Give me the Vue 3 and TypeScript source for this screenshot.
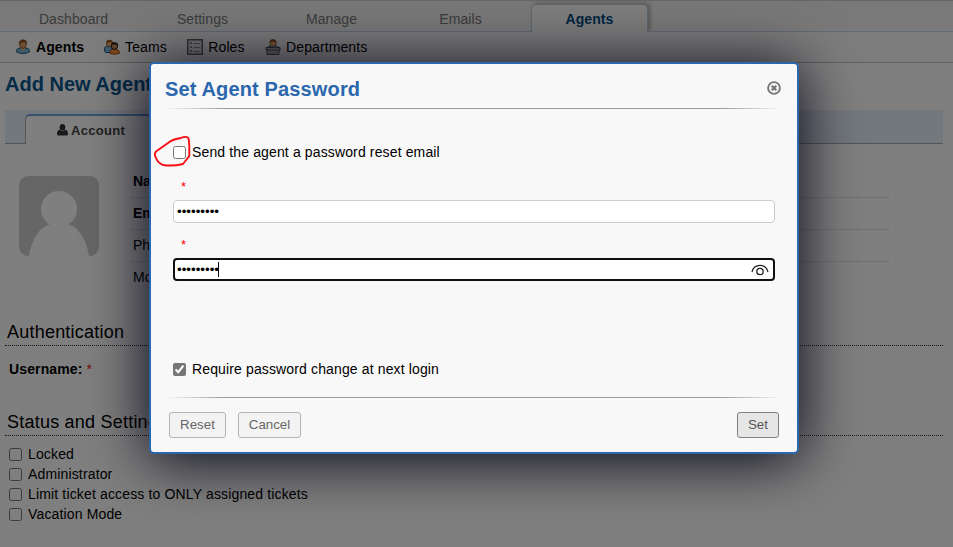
<script setup lang="ts">
import { ref } from 'vue'

interface Tab { label: string; active?: boolean }

const tabs: Tab[] = [
  { label: 'Dashboard' },
  { label: 'Settings' },
  { label: 'Manage' },
  { label: 'Emails' },
  { label: 'Agents', active: true },
]
const fields = [
  { label: 'Name:', required: true },
  { label: 'Email Address:', required: true },
  { label: 'Phone Number:', required: false },
  { label: 'Mobile Number:', required: false },
]
const settings = ['Locked', 'Administrator', 'Limit ticket access to ONLY assigned tickets', 'Vacation Mode']

const sendReset = ref(false)
const requireChange = ref(true)
const password = ref('agentpass')
const confirmation = ref('agentpass')
</script>

<template>
  <div class="screen">
    <div class="page">
      <nav class="tabs">
        <a v-for="t in tabs" :key="t.label" class="tab" :class="{ active: t.active }">{{ t.label }}</a>
      </nav>
      <nav class="subnav">
        <a class="sub current">
          <svg width="16" height="16" viewBox="0 0 16 16">
            <path d="M1.500 11.500Q2 9 5 9h6q3 0 3.500 2.500v1.500Q11 14.500 8 14.500T1.500 13z" fill="#78b4da" stroke="#315f80" />
            <path d="M6 8h4v2L8 11.500 6 10z" fill="#efad6b" />
            <ellipse cx="8" cy="5.500" rx="3.300" ry="3.800" fill="#e0a068" stroke="#99602c" />
            <path d="M4 5.500C3.500 2 5.500.5 8 .5s4.500 1.500 4 5L10.500 3.500H6.500z" fill="#8e501c" />
          </svg>
          <span>Agents</span>
        </a>
        <a class="sub teams">
          <svg width="16" height="16" viewBox="0 0 16 16">
            <path d="M.5 9Q1 7.500 3 7.500h5v6H2Q.5 13 .5 11z" fill="#78b4da" stroke="#315f80" />
            <circle cx="5.500" cy="4.500" r="3" fill="#f4b77a" stroke="#85501f" />
            <path d="M2.500 4.500Q2 .5 5.500.8T8.500 4L6.500 3z" fill="#9b5820" />
            <path d="M6 12.500Q6.500 10.500 8.500 10.500h4q2 0 2.800 2v2q-4.500 1.500-9.300 0z" fill="#f59145" stroke="#a64815" />
            <circle cx="10.500" cy="7" r="3.200" fill="#c48c60" stroke="#382619" />
            <path d="M7 7Q6.500 3 10.500 3.200T14 7L11.800 5.500H9z" fill="#33261d" />
          </svg>
          <span>Teams</span>
        </a>
        <a class="sub roles">
          <svg width="16" height="16" viewBox="0 0 16 16">
            <path d="M.75.750h14.500v14.500H.75z" fill="#e6e6e6" stroke="#626262" stroke-width="1.500" />
            <path d="M3 3h2v2H3zm0 4h2v2H3zm0 4h2v2H3z" fill="#888" />
            <path d="M6.500 4.500H13M6.500 8.500H13M6.500 12.500H13" stroke="#8a8a8a" />
          </svg>
          <span>Roles</span>
        </a>
        <a class="sub depts">
          <svg width="16" height="16" viewBox="0 0 16 16">
            <path d="M3.500 9V7.500L6 6.500h4l2.500 1V9z" fill="#78b4da" stroke="#315f80" />
            <ellipse cx="8" cy="4" rx="3" ry="3.300" fill="#f4b77a" stroke="#99602c" />
            <path d="M4.500 4Q4.500.3 8 .3t3.500 3.700L9.500 2.800h-3z" fill="#8d501d" />
            <path d="M1 8.500h14v2.500h-1v4.500H2V11H1z" fill="#b7afb0" stroke="#544e50" />
            <path d="M2 11h12" stroke="#6b6466" />
          </svg>
          <span>Departments</span>
        </a>
      </nav>
      <main class="content">
        <h2>Add New Agent</h2>
        <div class="strip">
          <div class="account">
            <svg width="11" height="12" viewBox="0 0 11 12">
              <ellipse cx="5.500" cy="3.200" rx="2.800" ry="3.200" />
              <path d="M0 10Q0 6 2.800 5.800q2.700 2.200 5.400 0Q11 6 11 10q0 1.500-1.500 1.500h-8Q0 11.500 0 10z" />
            </svg>
            <span>Account</span>
          </div>
        </div>
        <section class="profile">
          <svg class="avatar" width="80" height="80" viewBox="0 0 80 80">
            <rect width="80" height="80" rx="9" fill="#cdcdcd" />
            <circle cx="40" cy="33" r="18" fill="#fff" />
            <path d="M10 80C13 62 22 49 33 48h14c11 1 20 14 23 32z" fill="#fff" />
          </svg>
          <div class="rows">
            <div v-for="f in fields" :key="f.label" class="row" :class="{ required: f.required }">{{ f.label }}</div>
          </div>
        </section>
        <h3>Authentication</h3>
        <div class="username">Username: <span class="star">*</span></div>
        <h3 class="status">Status and Settings</h3>
        <div class="settings">
          <label v-for="s in settings" :key="s"><input type="checkbox"><span>{{ s }}</span></label>
        </div>
      </main>
    </div>

    <div class="overlay">
      <div class="dialog">
        <header>
          <h1>Set Agent Password</h1>
          <svg class="close" width="14" height="14" viewBox="0 0 14 14">
            <circle cx="7" cy="7" r="5.900" fill="none" stroke="#777" stroke-width="1.900" />
            <path d="M4.700 4.700l4.600 4.600M9.300 4.700L4.700 9.300" stroke="#777" stroke-width="2.200" />
          </svg>
        </header>
        <div class="rule"></div>
        <div class="form">
          <label class="check first">
            <input v-model="sendReset" type="checkbox"><span>Send the agent a password reset email</span>
          </label>
          <div class="mark">*</div>
          <div class="field"><input v-model="password" type="password"></div>
          <div class="mark">*</div>
          <div class="field focused">
            <input v-model="confirmation" type="password">
            <i class="caret"></i>
            <svg class="eye" width="18" height="12" viewBox="0 0 18 12">
              <path d="M1 8C3 -.8 15 -.8 17 8" fill="none" stroke="#222" stroke-width="1.200" />
              <circle cx="9" cy="7.500" r="3.200" fill="none" stroke="#222" stroke-width="1.300" />
            </svg>
          </div>
          <label class="check second">
            <input v-model="requireChange" type="checkbox"><span>Require password change at next login</span>
          </label>
        </div>
        <div class="rule"></div>
        <footer>
          <button>Reset</button>
          <button class="cancel">Cancel</button>
          <button class="save">Set</button>
        </footer>
        <svg class="scribble" width="40" height="34" viewBox="0 0 40 34">
          <path d="M35 3.500Q32 2 28 4Q20 5 15 9L3 17.500Q.8 20 3 24Q5 29 10 31Q20 32.500 30 30Q34 25 36.300 22V12Q36 5 35 3.500" fill="none" stroke="#f80c12" stroke-width="1.900" stroke-linejoin="round" />
        </svg>
      </div>
    </div>
  </div>
</template>

<style>
body { margin: 0; overflow: hidden; }
</style>

<style scoped>
* { box-sizing: border-box; }
.screen { position: relative; width: 953px; height: 547px; overflow: hidden; font: 14px/20px "Liberation Sans", Arial, sans-serif; color: #000; background: #fff; }
h1, h2, h3 { margin: 0; }
input[type="checkbox"] { margin: 0; width: 13px; height: 13px; flex: none; }
.tabs { display: flex; height: 32px; padding: 4px 0 0 15px; border-top: 1px solid #ccc; border-bottom: 1px solid #c5d9ec; background: linear-gradient(#f0f0f0, #f5f5f5); }
.tab { width: 117px; height: 27px; margin-right: 12px; padding-top: 4px; text-align: center; color: #777; letter-spacing: .08px; }
.tab.active { border: 1px solid #bdd0e2; border-bottom: 0; border-radius: 5px 5px 0 0; background: #fbfbfb; color: #004a80; font-weight: bold; box-shadow: 2px -1px 4px #aaa; clip-path: inset(-5px -7px 0 -5px); margin-top: -1px; height: 28px; }
.subnav { display: flex; height: 31px; padding-left: 15px; align-items: center; border-bottom: 1px solid #bebebe; background: #fbfbfb; }
.sub { display: flex; align-items: center; gap: 5px; letter-spacing: .1px; }
.current { font-weight: bold; }
.teams { margin-left: 20px; }
.roles { margin-left: 20.500px; }
.depts { margin-left: 20.500px; }
.content { padding: 0 10px 0 5px; }
h2 { padding-top: 9px; height: 47px; font-size: 20px; line-height: 25px; color: #0a568e; }
.strip { height: 34px; padding: 4px 0 0 20px; background: #e7f0f8; border-bottom: 1px solid #aaa; }
.account { display: flex; align-items: center; gap: 3px; width: 133px; height: 30px; padding: 1px 0 0 31px; border: 1px solid #aaa; border-top: 2px solid #6ba2dc; border-bottom: 0; border-radius: 5px 5px 0 0; background: #fff; font-weight: bold; font-size: 13px; letter-spacing: .3px; color: #444; }
.account svg { fill: #333; margin-bottom: 1px; }
.profile { display: flex; height: 174px; padding: 21px 54px 0 14px; gap: 31px; }
.avatar { margin-top: 11px; }
.rows { flex: 1; padding-top: 1px; }
.row { height: 32px; padding: 5px 0 0 3px; border-bottom: 1px dotted #ccc; }
.row:last-child { border: 0; }
.row.required { font-weight: bold; }
h3 { height: 28px; padding: 2px; border-bottom: 1px dotted #333; font-size: 18px; line-height: 24px; font-weight: normal; letter-spacing: .22px; }
.username { height: 62px; padding: 13px 4px; font-weight: bold; letter-spacing: .13px; }
.star { color: #e02020; font-weight: normal; }
.settings { padding: 8px 4px; letter-spacing: .15px; }
.settings label { display: flex; align-items: center; gap: 6px; height: 20px; }
.overlay { position: absolute; inset: 0; padding: 62px 0 0 149px; background: rgba(0, 0, 0, .5); }
.dialog { position: relative; width: 650px; height: 392px; padding: 0 14px; border: 2px solid #2a67ac; border-radius: 5px; background: #f8f8f8; box-shadow: 0 5px 60px #001; }
header { display: flex; justify-content: space-between; height: 44px; padding: 12px 2px 0 0; }
h1 { font-size: 20px; line-height: 26px; color: #2a67ac; letter-spacing: .14px; }
.close { margin-top: 5px; }
.rule { height: 1px; margin: 0 1px; background: linear-gradient(to right, transparent, #999 10%, #999 90%, transparent); }
.form { height: 288px; padding: 33px 8px 0; }
.check { display: flex; align-items: center; gap: 6px; height: 20px; letter-spacing: .135px; }
.check input { accent-color: #767676; }
.mark { height: 35px; padding: 13px 0 0 8px; color: #f00; font-size: 13px; line-height: 18px; }
.first + .mark { height: 38px; padding-top: 16px; }
.field { position: relative; height: 23px; border: 1px solid #ccc; border-radius: 4px; background: #fff; }
.field input { width: 100%; height: 21px; padding: 0 3px; border: 0; outline: 0; background: none; font: 13.333px "Liberation Sans", Arial, sans-serif; display: block; }
.focused { border: 2px solid #101010; }
.focused input { height: 19px; padding: 0 2px; }
.caret { position: absolute; left: 43px; top: 2px; width: 1px; height: 15px; background: #000; }
.eye { position: absolute; right: 4px; top: 4px; }
.second { margin-top: 78px; }
footer { display: flex; padding: 14px 4px 0 4px; }
button { width: 57px; height: 26px; padding: 0 0 1px; border: 1px solid #b4b4b4; border-radius: 3px; background: #f3f3f3; color: #666; font: 13.333px "Liberation Sans", Arial, sans-serif; }
.cancel { width: 63px; margin-left: 12px; }
.save { width: 42px; margin-left: auto; border-color: #808080; background: #e6e6e6; color: #555; }
.scribble { position: absolute; left: 2px; top: 70px; }
</style>
